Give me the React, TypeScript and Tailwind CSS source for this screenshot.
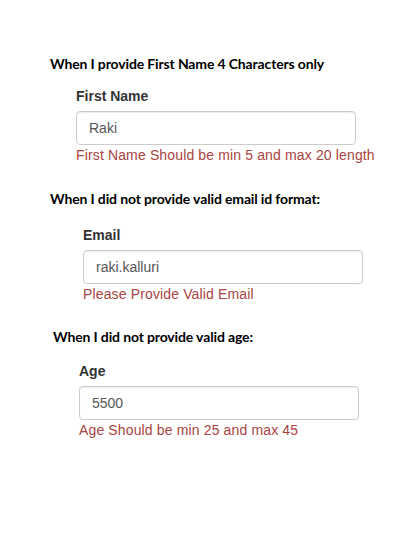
const fieldFont = { fontFamily: '"Liberation Sans", Arial, sans-serif' };

type Case = {
  title: string;
  label: string;
  value: string;
  error: string;
  headPad: string;
  fieldPad: string;
};

const CASES: Case[] = [
  {
    title: "When I provide First Name 4 Characters only",
    label: "First Name",
    value: "Raki",
    error: "First Name Should be min 5 and max 20 length",
    headPad: "pl-[50px] pt-[54px]",
    fieldPad: "pl-[76px] mt-[12px]",
  },
  {
    title: "When I did not provide valid email id format:",
    label: "Email",
    value: "raki.kalluri",
    error: "Please Provide Valid Email",
    headPad: "pl-[50px] pt-[24px]",
    fieldPad: "pl-[83px] mt-[16px]",
  },
  {
    title: "When I did not provide valid age:",
    label: "Age",
    value: "5500",
    error: "Age Should be min 25 and max 45",
    headPad: "pl-[53px] pt-[23px]",
    fieldPad: "pl-[79px] mt-[14px]",
  },
];

export default function App() {
  return (
    <div className="min-h-screen w-[410px] bg-white">
      {CASES.map((c) => (
        <section key={c.label}>
          {/* ── Scenario heading ── */}
          <h2
            className={`${c.headPad} text-[14px] leading-[20px] font-bold text-black tracking-[-0.01em]`}
            style={{ fontFamily: 'Lato, "Open Sans", sans-serif' }}
          >
            {c.title}
          </h2>

          {/* ── Form group ── */}
          <div className={c.fieldPad} style={fieldFont}>
            <label className="block text-[14px] leading-[20px] font-bold text-[#333] mb-[5px]">
              {c.label}
            </label>
            <input
              readOnly
              value={c.value}
              className="block w-[280px] h-[34px] px-3 text-[14px] text-[#555] bg-white border border-[#ccc] rounded-[4px] shadow-[inset_0_1px_1px_rgba(0,0,0,0.075)] outline-none"
            />
            <p className="text-[14px] leading-[20px] text-[#a94442] tracking-[0.01em]">
              {c.error}
            </p>
          </div>
        </section>
      ))}
    </div>
  );
}
